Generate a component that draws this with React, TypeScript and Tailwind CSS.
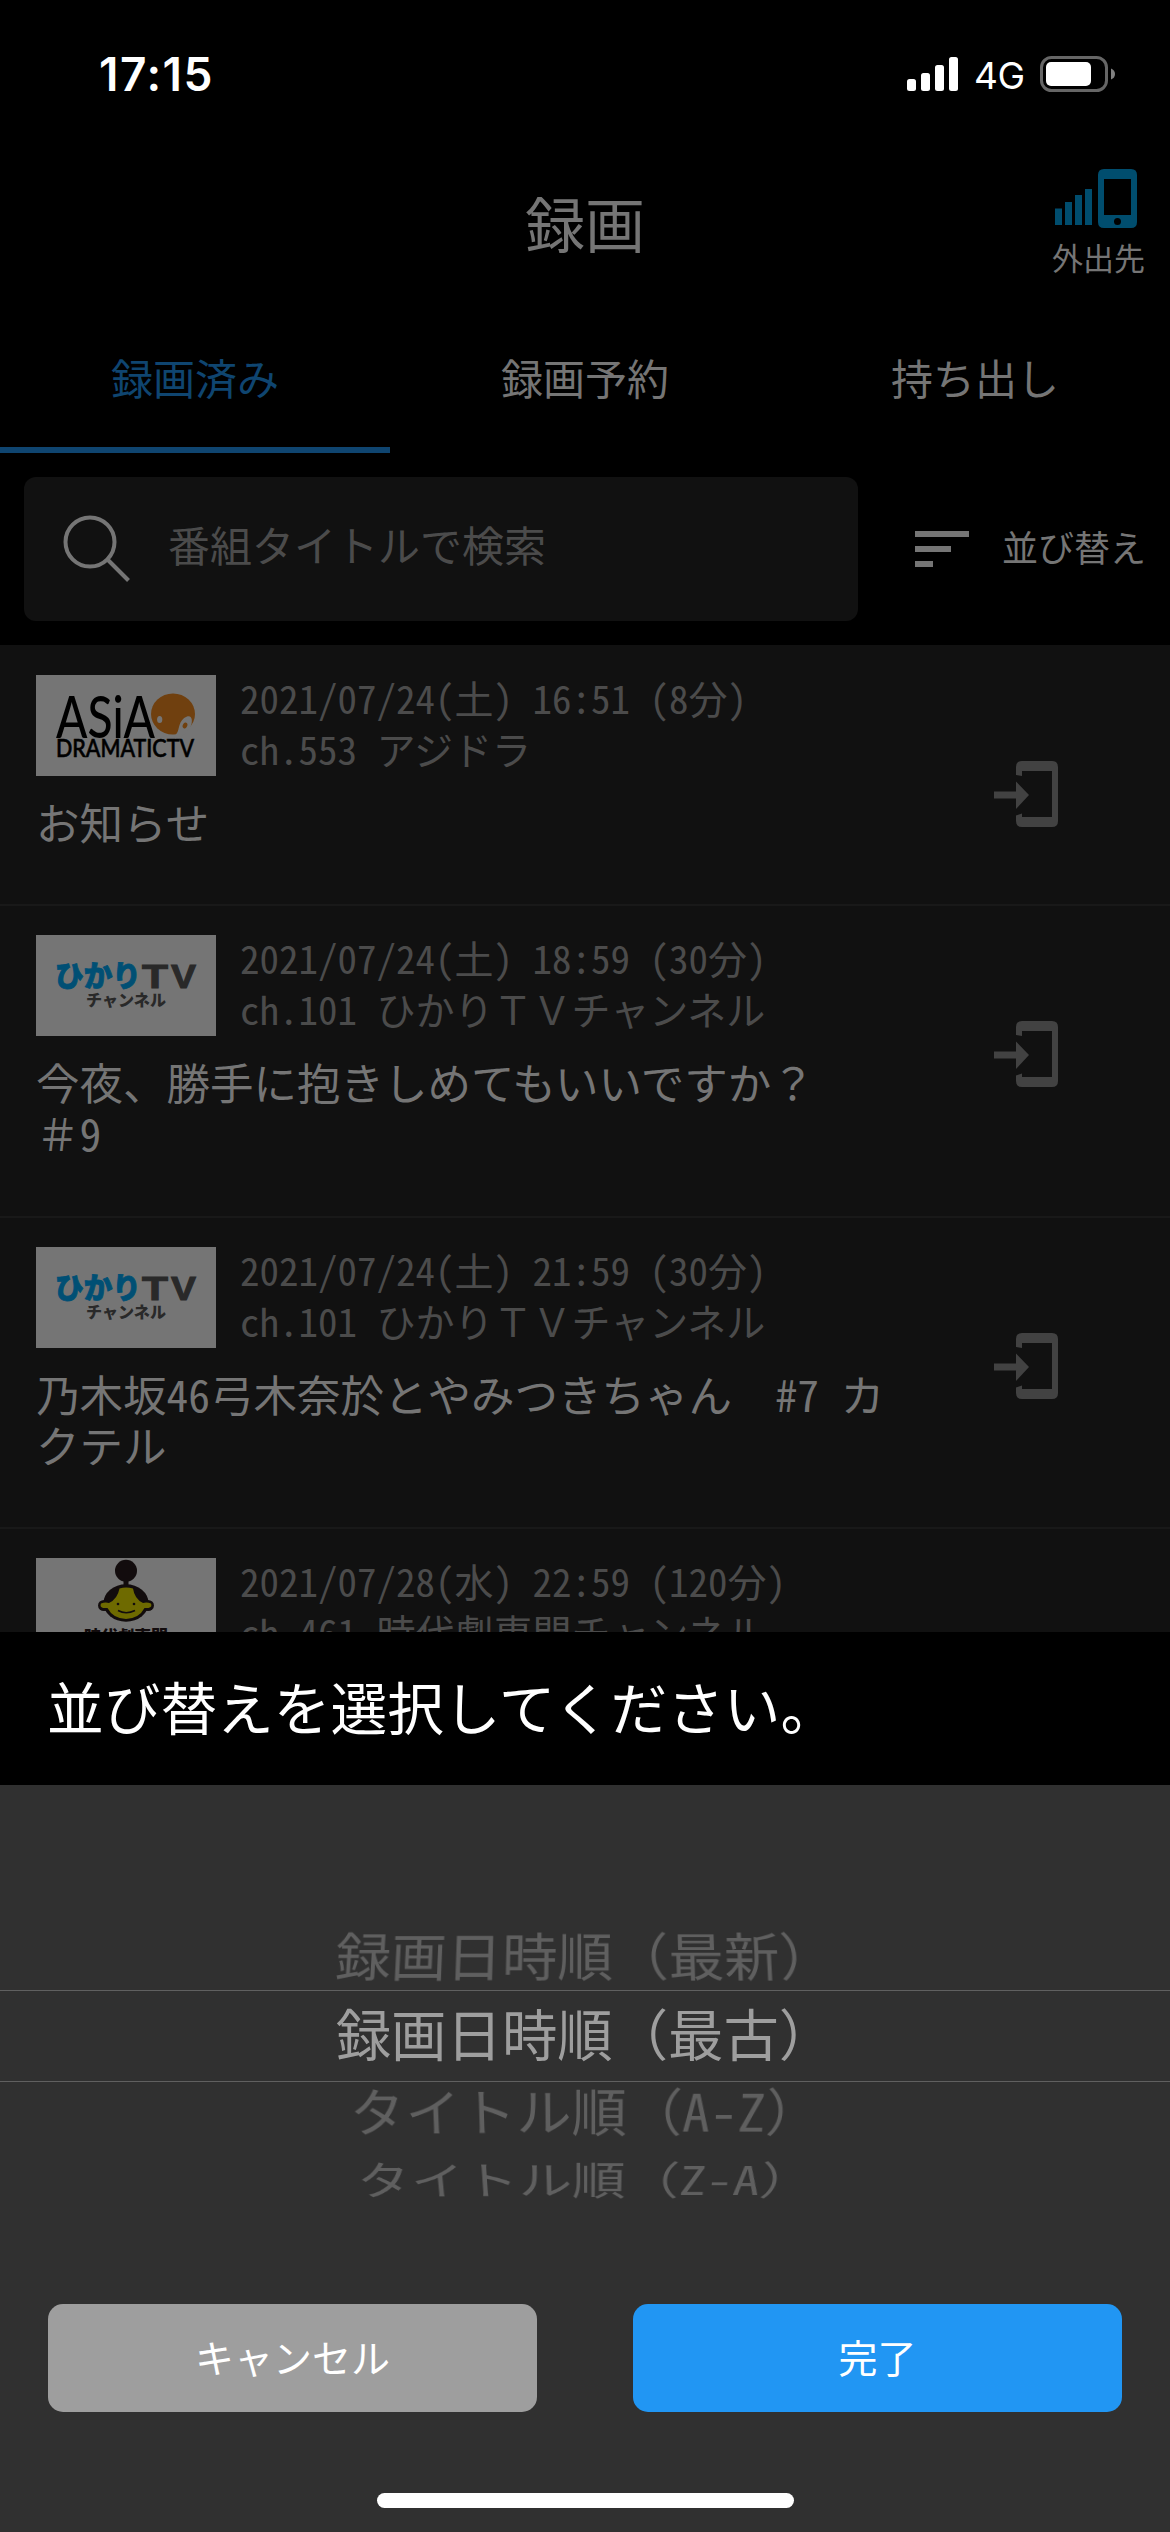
import React from 'react';

interface Recording {
  id: number;
  logo: 'asia' | 'hikari' | 'jidaigeki';
  date: string;
  channel: string;
  title: string[];
  height: string;
}

const recordings: Recording[] = [
  { id: 1, logo: 'asia', date: '2021/07/24(土) 16:51 (8分)', channel: 'ch.553 アジドラ', title: ['お知らせ'], height: 'h-[259px] pt-[30px]' },
  { id: 2, logo: 'hikari', date: '2021/07/24(土) 18:59 (30分)', channel: 'ch.101 ひかりＴＶチャンネル', title: ['今夜、勝手に抱きしめてもいいですか？', '＃9'], height: 'h-[312px] border-t-2 pt-[29px]' },
  { id: 3, logo: 'hikari', date: '2021/07/24(土) 21:59 (30分)', channel: 'ch.101 ひかりＴＶチャンネル', title: ['乃木坂46弓木奈於とやみつきちゃん　#7 カ', 'クテル'], height: 'h-[311px] border-t-2 pt-[29px]' },
  { id: 4, logo: 'jidaigeki', date: '2021/07/28(水) 22:59 (120分)', channel: 'ch.461 時代劇専門チャンネル', title: [], height: 'h-[312px] border-t-2 pt-[29px]' },
];

// ASCII runs use half-width glyphs, everything else keeps its full-width cell
const Mixed = ({ text }: { text: string }) => (
  <>
    {text.split(/([\x20-\x7e]+)/).map((part, i) =>
      i % 2 ? <span key={i} className="[font-feature-settings:'hwid']">{part}</span> : part
    )}
  </>
);

const AsiaLogo = () => (
  <svg viewBox="0 0 180 101" className="h-[101px] w-[180px]" fontFamily="Lato, sans-serif">
    <text x="20" y="63" fontSize="58" textLength="99" lengthAdjust="spacingAndGlyphs" fontWeight="500">ASiA</text>
    <text x="20" y="81.500" fontSize="24" textLength="138" lengthAdjust="spacingAndGlyphs" fontWeight="500" stroke="#000" strokeWidth="0.600">DRAMATICTV</text>
    <ellipse cx="137" cy="39" rx="22" ry="20.500" fill="#70400f" />
    <ellipse cx="123.700" cy="44.500" rx="2.600" ry="3.500" fill="#757575" />
    <path d="M151 41.500C156 39.500 157.500 46 154 53Q149 61 139 63.500Q138 61 141 58C143.500 55 142 45 151 41.500Z" fill="#757575" />
    <ellipse cx="149" cy="50.500" rx="2.200" ry="3" fill="#70400f" transform="rotate(25 149 50.500)" />
  </svg>
);

const HikariLogo = () => (
  <svg viewBox="0 0 180 101" className="h-[101px] w-[180px]" fontFamily="'Noto Sans CJK JP', sans-serif" fontWeight="900">
    <text x="19" y="52" fontSize="29" textLength="86" lengthAdjust="spacingAndGlyphs" fill="#004f74" stroke="#004f74" strokeWidth="0.800">ひかり</text>
    <g fill="#292929">
      <text x="106" y="52.500" fontSize="33" textLength="26" lengthAdjust="spacingAndGlyphs" fontFamily="'Liberation Sans', sans-serif" stroke="#292929">T</text>
      <text x="135" y="52.500" fontSize="33" textLength="25" lengthAdjust="spacingAndGlyphs" fontFamily="'Liberation Sans', sans-serif" stroke="#292929">V</text>
      <text x="50" y="71" fontSize="16" textLength="80" lengthAdjust="spacingAndGlyphs">チャンネル</text>
    </g>
  </svg>
);

const JidaigekiLogo = () => (
  <svg viewBox="0 0 180 101" className="h-[101px] w-[180px]" fontFamily="'Noto Sans CJK JP', sans-serif" fontWeight="900">
    <circle cx="90" cy="12.700" r="11" fill="#120c0d" />
    <path d="M87.500 22h5v8h-5z" fill="#120c0d" />
    <ellipse cx="90" cy="45" rx="22.500" ry="18.700" fill="#120c0d" />
    <ellipse cx="68" cy="47.500" rx="6" ry="5.500" fill="#120c0d" />
    <ellipse cx="112" cy="47.500" rx="6" ry="5.500" fill="#120c0d" />
    <path d="M83.500 30.500Q90 28.500 97 30.500Q98.500 41 107 45Q111 44 115 45.500Q116.500 49 112.500 50L108.500 50Q103 60.500 90 61Q77 60.500 71.500 50L67 50Q63.500 49 65 45.500Q69 44 73 45Q81.500 41 83.500 30.500Z" fill="#6e6a00" />
    <circle cx="82" cy="46" r="1.300" fill="#120c0d" />
    <circle cx="98" cy="46" r="1.300" fill="#120c0d" />
    <path d="M82 52.500q8 4.500 17 0" fill="none" stroke="#120c0d" strokeWidth="1.500" />
    <text x="48" y="85" fontSize="17" textLength="84" fill="#120c0d">時代劇専門</text>
  </svg>
);

const logos = {
  asia: <AsiaLogo />,
  hikari: <HikariLogo />,
  jidaigeki: <JidaigekiLogo />,
};

const TakeOutIcon = () => (
  <svg viewBox="0 0 66 68" className="mt-[85px] h-[68px] w-[66px]" fill="#424242">
    <path d="M23 15V7q0-6 6-6h30q6 0 6 6v54q0 6-6 6H29q-6 0-6-6v-5.500l6-2v3.500h30V11H29v5z" />
    <path d="M1 31.500h22v-10L36 35 23 49V38.500H1z" />
  </svg>
);

const StatusBar = () => (
  <div className="flex h-[150px] items-start justify-between pt-[56px] pr-[54px] pl-[99px] text-white">
    <span className="font-[Inter] text-[46px] leading-[37px] font-semibold tracking-[1.500px]">17:15</span>
    <div className="flex items-start">
      <svg viewBox="0 0 51 36" className="h-[36px] w-[51px]" fill="#fff">
        <rect x="0" y="23" width="9" height="12" rx="2.500" />
        <rect x="14" y="17" width="9" height="18" rx="2.500" />
        <rect x="28" y="9" width="9" height="26" rx="2.500" />
        <rect x="42" y="1" width="9" height="34" rx="2.500" />
      </svg>
      <span className="ml-[16px] w-[66px] font-[Inter] text-[37px] leading-[39px] tracking-[-0.500px]">4G</span>
      <svg viewBox="0 0 76 36" className="h-[36px] w-[76px]">
        <rect x="1.500" y="1.500" width="65" height="33" rx="10" fill="none" stroke="#666" strokeWidth="3" />
        <rect x="6" y="6" width="45" height="24" rx="5" fill="#fff" />
        <path d="M71 12.500q4 1.500 4 5.500t-4 5.500z" fill="#808080" />
      </svg>
    </div>
  </div>
);

const Header = () => (
  <header className="grid h-[150px] grid-cols-3 text-[#757575]">
    <h1 className="col-start-2 text-center text-[60px] leading-[144px]">録画</h1>
    <div className="flex flex-col items-end pt-[19px] pr-[25px]">
      <svg viewBox="0 0 83 60" className="mr-[7px] h-[60px] w-[83px]" fill="#004d6e">
        <path d="M0 39.500h7V56H0zM10 33h7v23h-7zM20 26h7v30h-7zM30 20h7v36h-7z" />
        <path fillRule="evenodd" d="M49 0h27q6 0 6 6v47q0 6-6 6H49q-6 0-6-6V6q0-6 6-6zM49 10v36h27V10zM62.500 49a3.500 3.500 0 1 0 0 7a3.500 3.500 0 1 0 0-7z" />
      </svg>
      <span className="mt-[8px] text-[31px] leading-[40px]">外出先</span>
    </div>
  </header>
);

const Tabs = () => (
  <nav className="grid h-[153px] grid-cols-3 text-center text-[42px] leading-[141px] text-[#757575]">
    <span className="border-b-[6px] border-[#0f4570] pt-[6px] text-[#0f4570]">録画済み</span>
    <span className="pt-[6px]">録画予約</span>
    <span className="pt-[6px]">持ち出し</span>
  </nav>
);

const SearchRow = () => (
  <div className="flex h-[192px] items-start pt-[24px] pl-[24px]">
    <div className="flex h-[144px] w-[834px] items-center rounded-[12px] bg-[#111] pl-[39px]">
      <svg viewBox="0 0 68 68" className="h-[68px] w-[68px]" fill="none" stroke="#757575" strokeWidth="4">
        <circle cx="27" cy="27" r="24.500" />
        <path d="M44.500 44.500L65.500 65.500" />
      </svg>
      <span className="ml-[37px] pb-[11px] text-[42px] leading-[60px] text-[#4b4b4b]">番組タイトルで検索</span>
    </div>
    <svg viewBox="0 0 54 36" className="mt-[54px] ml-[57px] h-[36px] w-[54px]" fill="#757575">
      <path d="M0 0h54v6H0zM0 15h36v6H0zM0 30h18v6H0z" />
    </svg>
    <span className="ml-[33px] text-[36px] leading-[138px] whitespace-nowrap text-[#757575]">並び替え</span>
  </div>
);

const RecordingRow: React.FC<{ item: Recording }> = ({ item }) => (
  <li className={`flex shrink-0 justify-between border-[#191919] pr-[111px] pl-[36px] ${item.height}`}>
    <div>
      <div className="flex">
        <div className="h-[101px] w-[180px] bg-[#757575]">{logos[item.logo]}</div>
        <div className="-mt-[3px] ml-[24px] text-[39px] leading-[51px] text-[#4b4b4b]">
          <p className="whitespace-pre"><Mixed text={item.date} /></p>
          <p className="whitespace-pre"><Mixed text={item.channel} /></p>
        </div>
      </div>
      <div className="mt-[20px] text-[43.500px] leading-[51px] text-[#757575]">
        {item.title.map((line) => (
          <p key={line} className="whitespace-pre"><Mixed text={line} /></p>
        ))}
      </div>
    </div>
    <TakeOutIcon />
  </li>
);

const SortSheet = () => (
  <section className="flex h-[900px] flex-col bg-[#303030]">
    <h2 className="h-[153px] bg-black pl-[47px] text-[56.700px] leading-[146px] text-white">並び替えを選択してください。</h2>
    <div className="flex flex-col items-center pt-[124px] text-[55.400px] whitespace-pre text-[#5f5f5f]">
      <div className="h-[81px] leading-[90px] [transform:perspective(1500px)_rotateX(23deg)]">録画日時順（最新）</div>
      <div className="h-[92px] w-full border-y border-[#606060] text-center leading-[82px] text-[#9e9e9e]">録画日時順（最古）</div>
      <div className="h-[68px] leading-[55px] [transform:perspective(1500px)_rotateX(-23deg)]"><Mixed text="タイトル順（A-Z）" /></div>
      <div className="h-[62px] leading-[54px] [transform:perspective(1500px)_rotateX(-45deg)_scaleX(0.97)]"><Mixed text="タイトル順（Z-A）" /></div>
    </div>
    <div className="mt-[92px] flex gap-[96px] px-[48px] text-[39px] leading-[102px] text-white">
      <button className="h-[108px] flex-1 rounded-[15px] bg-[#9e9e9e] pb-[4px]">キャンセル</button>
      <button className="h-[108px] flex-1 rounded-[15px] bg-[#2196f3] pb-[4px]">完了</button>
    </div>
    <div className="mx-auto mt-[81px] h-[15px] w-[417px] rounded-full bg-white" />
  </section>
);

export default function App() {
  return (
    <div className="flex h-[2532px] w-[1170px] flex-col overflow-hidden bg-black font-['Noto_Sans_CJK_JP',sans-serif]">
      <StatusBar />
      <Header />
      <Tabs />
      <SearchRow />
      <ul className="flex h-[987px] flex-col overflow-hidden bg-[#111]">
        {recordings.map((item) => (
          <RecordingRow key={item.id} item={item} />
        ))}
      </ul>
      <SortSheet />
    </div>
  );
}
